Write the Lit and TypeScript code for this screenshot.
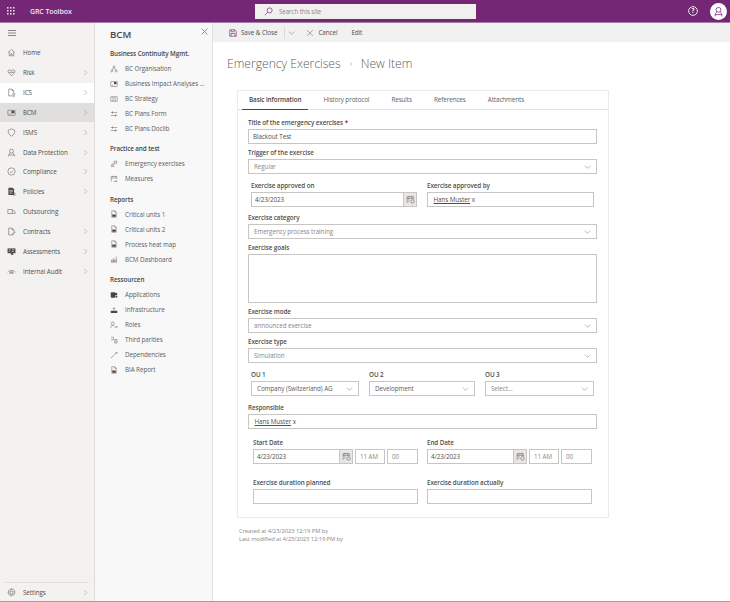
import { LitElement, html, css, svg } from "lit";
import { customElement } from "lit/decorators.js";

// icon bodies, all in a 16x16 box
const icons: Record<string, unknown> = {
  home: svg`<path d="M2 8l6-5.500L14 8M4 6.500V14h3v-4h2v4h3V6.500"/>`,
  risk: svg`<path d="M8 14L2.500 8C.5 5.500 3 2.500 5.500 3.500L8 5l2.500-1.500C13 2.500 15.500 5.500 13.500 8z"/><path d="M3 8h3l1-1.500L8.500 9l1-1.500H13"/>`,
  ics: svg`<path d="M10 14H3V2h6l3 3v3M9 2v3h3"/><circle cx="12" cy="11" r="2"/><path d="M10 14.500h4"/>`,
  bcm: svg`<rect x="1.500" y="4" width="13" height="9" rx="1"/><path class="solid" d="M8 5h5v5l-2-1.500-3 2z"/><path d="M3 10.500h3"/>`,
  isms: svg`<path d="M8 1.500L14 4c0 5-1.500 8.500-6 10.500C3.500 12.500 2 9 2 4z"/>`,
  person: svg`<circle cx="8" cy="5.500" r="3.500"/><path d="M3 15c0-4 1.500-6 3-6.500M13 15c0-4-1.500-6-3-6.500M3 12.500h10"/>`,
  check: svg`<circle cx="8" cy="8" r="6.500"/><path d="M5 8.500l2 2 4-4.500"/>`,
  policies: svg`<path class="solid" d="M2.500 1.500H10L12.500 4v10h-10z"/><path class="cut" d="M4.500 6h6M4.500 8.500h6M4.500 11h4"/><path d="M12 9l2.500 2v3.500H11"/>`,
  outsourcing: svg`<path d="M1.500 4.500h8v7h-8zM9.500 6.500h3l2 2.500v2.500h-5"/>`,
  contracts: svg`<path d="M11 14H3V2h6l3 3v3M9 2v3h3"/><path d="M9 13l4.500-5 1 1L10 14z"/>`,
  assess: svg`<rect class="solid" x="1" y="2.500" width="14" height="8.500"/><path class="cut" d="M3 5h4M9 5h4M3 8h2M8 8h4"/><path class="solid" d="M6 11h5v3H8z"/>`,
  audit: svg`<path d="M1 9.500C4 5 12 5 15 9.500"/><path d="M3.500 11.500C6 9.500 10 9.500 12.500 11.500"/><circle cx="8" cy="9.500" r="2"/>`,
  gear: svg`<circle cx="8" cy="8" r="2.500"/><path d="M6.800 1.500h2.400l.4 2 1.800-1 1.700 1.700-1 1.800 2 .4v2.400l-2 .4 1 1.800-1.700 1.700-1.800-1-.4 2H6.800l-.4-2-1.800 1-1.700-1.700 1-1.800-2-.4V6.800l2-.4-1-1.800 1.700-1.700 1.800 1z"/>`,
  org: svg`<circle cx="8" cy="4" r="2"/><circle cx="3.500" cy="12" r="2"/><circle cx="12.500" cy="12" r="2"/><path d="M7 6l-2.500 4M9 6l2.500 4"/>`,
  card: svg`<rect x="1.500" y="3" width="13" height="10" rx="1"/><path class="solid" d="M8 4h5v5l-2-1.500-3 2z"/><path d="M3.500 10.500h3"/>`,
  map: svg`<path d="M1.500 3.500h13v9h-13zM6 3.500v9M10 3.500v9"/>`,
  sliders: svg`<path d="M1.500 5h13M1.500 11h13"/><path d="M5 2.500v5M11 8.500v5"/>`,
  flag: svg`<circle cx="5" cy="10" r="2"/><path d="M2 14.500c0-1.500 1-2 3-2s3 .5 3 2M8 9V2.500l6 0-1.500 2 1.500 2H8"/>`,
  measure: svg`<path d="M2.500 13V3h11v5M2.500 6h11M5 1.500v3M11 1.500v3"/><path d="M7 12.500h7M12 10.500l2 2-2 2"/>`,
  report: svg`<path d="M12.500 14.500h-9v-13h6l3 3zM9.500 1.500v3h3"/><path class="solid" d="M4.500 9h7v4.500h-7z"/>`,
  dash: svg`<path d="M2 14.500h12M3.500 14V9M6.500 14V6M9.500 14V8M12.500 14V3"/><path d="M2 11.500h12"/>`,
  apps: svg`<rect class="solid" x="1.500" y="2.500" width="9" height="11" rx="2"/><circle class="solid" cx="12" cy="6" r="2.500"/><path class="solid" d="M11 9.500h3.500V13H11z"/>`,
  infra: svg`<path class="solid" d="M1.500 9.500h13v4.500h-13z"/><path d="M8 2.500v7M5.500 5h5"/>`,
  roles: svg`<circle cx="5.500" cy="5" r="3"/><path d="M1.500 14c0-3 1-5 4-5 1.500 0 2.500.5 3 1.500M9 12h5.500M12.500 10l2 2-2 2"/>`,
  third: svg`<path d="M2 2.500h5v5H2M9.500 7h4.500v7H9.500zM11 9.500h1.500M11 12h1.500"/>`,
  dep: svg`<path d="M3 13.500L13 3M2 12l2 2M11 3h3v3"/>`,
};

const navItems = [
  { label: "Home", icon: "home" },
  { label: "Risk", icon: "risk", more: true },
  { label: "ICS", icon: "ics", more: true, state: "open" },
  { label: "BCM", icon: "bcm", more: true, state: "current" },
  { label: "ISMS", icon: "isms", more: true },
  { label: "Data Protection", icon: "person", more: true },
  { label: "Compliance", icon: "check", more: true },
  { label: "Policies", icon: "policies", more: true },
  { label: "Outsourcing", icon: "outsourcing" },
  { label: "Contracts", icon: "contracts", more: true },
  { label: "Assessments", icon: "assess", more: true },
  { label: "Internal Audit", icon: "audit", more: true },
];

const subGroups = [
  {
    title: "Business Continuity Mgmt.",
    items: [
      ["BC Organisation", "org"],
      ["Business Impact Analyses ...", "card"],
      ["BC Strategy", "map"],
      ["BC Plans Form", "sliders"],
      ["BC Plans Doclib", "sliders"],
    ],
  },
  {
    title: "Practice and test",
    items: [
      ["Emergency exercises", "flag"],
      ["Measures", "measure"],
    ],
  },
  {
    title: "Reports",
    items: [
      ["Critical units 1", "report"],
      ["Critical units 2", "report"],
      ["Process heat map", "report"],
      ["BCM Dashboard", "dash"],
    ],
  },
  {
    title: "Ressourcen",
    items: [
      ["Applications", "apps"],
      ["Infrastructure", "infra"],
      ["Roles", "roles"],
      ["Third parities", "third"],
      ["Dependencies", "dep"],
      ["BIA Report", "report"],
    ],
  },
];

const tabs = ["Basic information", "History protocol", "Results", "References", "Attachments"];

function icon(name: string) {
  return html`<svg class="ico" viewBox="0 0 16 16">${icons[name]}</svg>`;
}

const chevronRight = html`<svg class="chev-r" viewBox="0 0 8 10"><path d="M2 1l4 4-4 4" /></svg>`;
const chevronDown = html`<svg class="chev-d" viewBox="0 0 10 6"><path d="M1 1l4 4 4-4" /></svg>`;

@customElement("app-root")
export class AppRoot extends LitElement {
  static styles = css`
    :host {
      display: flex;
      flex-direction: column;
      height: 602px;
      width: 730px;
      overflow: hidden;
      font-family: "Open Sans", "Liberation Sans", sans-serif;
      font-size: 6.3px;
      letter-spacing: -0.08px;
      color: #504e4c;
      background: #fff;
    }
    svg {
      display: block;
      flex: none;
    }
    .ico {
      width: 9px;
      height: 9px;
      fill: none;
      stroke: #6f6d6b;
      stroke-width: 1.1;
    }
    .ico .solid {
      fill: #484644;
      stroke: none;
    }
    .ico .cut {
      stroke: #f3f2f1;
    }

    .topbar {
      height: 22px;
      flex: none;
      display: flex;
      align-items: center;
      background: #742774;
      border-bottom: 1px solid #a77ea7;
      color: #f0e6f0;
    }
    .waffle {
      width: 8px;
      height: 8px;
      margin-left: 7px;
      fill: #e6d5e6;
    }
    .brand {
      margin-left: 15px;
      font-size: 7px;
      font-weight: 600;
      letter-spacing: -0.1px;
      width: 225px;
    }
    .search {
      width: 221px;
      height: 15px;
      background: #f1f0ef;
      display: flex;
      align-items: center;
      color: #8a8886;
      font-size: 6.2px;
    }
    .search svg {
      width: 9px;
      height: 9px;
      margin: 0 6px 0 9px;
      fill: none;
      stroke: #742774;
      stroke-width: 1.2;
    }
    .top-right {
      margin-left: auto;
      display: flex;
      align-items: center;
      gap: 12px;
      margin-right: 3px;
    }
    .help {
      width: 10px;
      height: 10px;
      fill: none;
      stroke: #fff;
      stroke-width: 1.4;
    }
    .help text {
      fill: #fff;
      stroke: none;
      font-size: 10px;
      font-weight: 700;
      text-anchor: middle;
    }
    .avatar {
      width: 17px;
      height: 17px;
      border-radius: 50%;
      background: #fff;
      display: flex;
      align-items: center;
      justify-content: center;
    }
    .avatar svg {
      width: 11px;
      height: 11px;
      fill: none;
      stroke: #742774;
      stroke-width: 1.1;
    }

    .body {
      flex: 1;
      min-height: 0;
      display: flex;
      border-bottom: 1px solid #a19f9d;
    }

    .nav {
      width: 94px;
      flex: none;
      background: #f3f2f1;
      border-right: 1px solid #dddcda;
      display: flex;
      flex-direction: column;
    }
    .burger {
      height: 20px;
      display: flex;
      align-items: center;
      padding-left: 8px;
    }
    .burger svg {
      width: 8px;
      height: 6px;
      stroke: #8a8886;
      stroke-width: 1;
    }
    .nav-item {
      height: 19.85px;
      display: flex;
      align-items: center;
      padding-left: 7px;
      gap: 7px;
      flex: none;
      box-sizing: border-box;
    }
    .nav-item.open {
      background: #fff;
    }
    .nav-item.current {
      background: #e1dfdd;
    }
    .nav-item .chev-r {
      margin-left: auto;
      margin-right: 6px;
    }
    .nav-spacer {
      flex: 1;
    }
    .nav-foot {
      margin: 0 5px;
      border-top: 1px solid #e1dfdd;
    }
    .nav-item.settings {
      height: 18px;
    }
    .chev-r {
      width: 5px;
      height: 7px;
      fill: none;
      stroke: #a19f9d;
      stroke-width: 1;
    }
    .chev-d {
      width: 7px;
      height: 4px;
      fill: none;
      stroke: #8a8886;
      stroke-width: 0.9;
    }

    .subnav {
      width: 118px;
      flex: none;
      box-sizing: border-box;
      background: #f8f8f8;
      border-right: 1px solid #e1dfdd;
      padding-left: 15px;
      position: relative;
    }
    .subnav-title {
      font-size: 9.6px;
      font-weight: 600;
      letter-spacing: 0;
      color: #484644;
      height: 13px;
      line-height: 13px;
      margin-top: 5px;
      margin-bottom: 5px;
    }
    .close {
      position: absolute;
      right: 4px;
      top: 5px;
      width: 7px;
      height: 7px;
      stroke: #8a8886;
      stroke-width: 0.9;
    }
    .sub-group {
      margin-bottom: 5.200px;
    }
    .sub-head {
      height: 15px;
      line-height: 15px;
      font-weight: 600;
      color: #484644;
      white-space: nowrap;
    }
    .sub-item {
      height: 15.050px;
      display: flex;
      align-items: center;
      gap: 7px;
      white-space: nowrap;
      color: #605e5c;
    }
    .sub-item .ico {
      width: 8px;
      height: 8px;
    }

    .main {
      flex: 1;
      min-width: 0;
      display: flex;
      flex-direction: column;
    }
    .commands {
      height: 19px;
      flex: none;
      background: #f1f1f1;
      display: flex;
      align-items: center;
      padding-left: 16px;
      color: #504e4c;
    }
    .commands .cmd {
      display: flex;
      align-items: center;
      gap: 4px;
    }
    .cmd svg {
      width: 8px;
      height: 8px;
      fill: none;
      stroke: #742774;
      stroke-width: 1.2;
    }
    .cmd.cancel svg {
      stroke: #605e5c;
      stroke-width: 1;
    }
    .cmd-sep {
      width: 1px;
      height: 12px;
      background: #dcdbd9;
      margin: 0 3px 0 7px;
    }
    .commands .chev-d {
      margin-right: 11px;
    }
    .cmd.cancel {
      margin-right: 14px;
    }

    .heading {
      margin: 14px 0 0 14px;
      height: 16px;
      line-height: 16px;
      font-size: 12.100px;
      font-weight: 300;
      letter-spacing: 0;
      color: #605e5c;
      display: flex;
      align-items: center;
    }
    .heading .crumb {
      margin: 0 8px;
      width: 4px;
      height: 6px;
    }
    .card {
      margin: 18px 0 0 24px;
      width: 372px;
      height: 428px;
      box-sizing: border-box;
      border: 1px solid #edebe9;
      flex: none;
    }
    .tabs {
      height: 19px;
      box-sizing: border-box;
      border-bottom: 1px solid #e1dfdd;
      display: flex;
      padding-left: 4px;
    }
    .tab {
      height: 19px;
      box-sizing: border-box;
      padding: 0 7px;
      margin-right: 8px;
      line-height: 18px;
      white-space: nowrap;
      color: #605e5c;
    }
    .tab.active {
      font-weight: 600;
      color: #484644;
      border-bottom: 1px solid #742774;
    }
    .form {
      padding: 8.400px 11px 0 10px;
    }
    .field {
      margin-bottom: 4px;
    }
    .lbl {
      display: block;
      height: 10px;
      line-height: 10px;
      margin-bottom: 1px;
      font-weight: 600;
      white-space: nowrap;
      color: #504e4c;
    }
    .lbl b {
      color: #a4262c;
      font-weight: 600;
    }
    .ctl {
      height: 15px;
      box-sizing: border-box;
      border: 1px solid #c8c6c4;
      background: #fff;
      display: flex;
      align-items: center;
      padding: 0 4px;
      white-space: nowrap;
      color: #504e4c;
    }
    .ctl.sel {
      color: #8a8886;
      justify-content: space-between;
      padding: 0 5px;
    }
    .ctl.sel.dark {
      color: #605e5c;
    }
    .ctl.area {
      height: 49px;
    }
    .person u {
      color: #504e4c;
      margin: 0 1.500px 0 1.500px;
    }
    .row {
      display: grid;
      column-gap: 10px;
    }
    .row.two {
      grid-template-columns: 166px 167px;
      margin: 7px 0 6px 3px;
    }
    .row.three {
      grid-template-columns: 108px 106px 109px;
      margin: 7px 0 7px 3px;
    }
    .row .field {
      margin: 0;
    }
    .dt {
      display: flex;
    }
    .dt .ctl {
      flex: 1;
      min-width: 0;
      padding: 0 3px;
    }
    .cal {
      width: 13px;
      height: 15px;
      flex: none;
      background: #e8e7e6;
      display: flex;
      align-items: center;
      justify-content: center;
      border: solid #c8c6c4;
      border-width: 1px 1px 1px 0;
      box-sizing: border-box;
    }
    .cal svg {
      width: 9px;
      height: 9px;
      fill: none;
      stroke: #605e5c;
      stroke-width: 1;
    }
    .row.when {
      grid-template-columns: 165px 165px;
      column-gap: 9px;
      margin: 9px 0 0 5px;
    }
    .row.dur {
      grid-template-columns: 165px 165px;
      column-gap: 9px;
      margin: 14px 0 0 5px;
    }
    .dt-time {
      display: flex;
      gap: 2px;
    }
    .dt-time .dt {
      flex: 1;
      min-width: 0;
    }
    .dt-time .ctl.small {
      color: #8a8886;
      flex: none;
      padding: 0 4px;
    }
    .hour {
      width: 30px;
    }
    .minute {
      width: 31px;
    }
    .audit {
      margin: 10px 0 0 26px;
      font-size: 5.800px;
      line-height: 7.500px;
      color: #8a8886;
    }
  `;

  private calendar() {
    return html`<span class="cal"><svg viewBox="0 0 16 16"><path d="M2 14V3h11v5M2 6h11M5 1.500v3M10 1.500v3M4 8.500h2M4 11h2"/><circle cx="11.500" cy="11.500" r="3"/></svg></span>`;
  }

  private select(label: string, value: string, dark = false) {
    return html`<div class="field">
      <span class="lbl">${label}</span>
      <div class="ctl sel ${dark ? "dark" : ""}"><span>${value}</span>${chevronDown}</div>
    </div>`;
  }

  private dateTime(label: string) {
    return html`<div class="field">
      <span class="lbl">${label}</span>
      <div class="dt-time">
        <div class="dt"><div class="ctl">4/23/2023</div>${this.calendar()}</div>
        <div class="ctl small hour">11 AM</div>
        <div class="ctl small minute">00</div>
      </div>
    </div>`;
  }

  render() {
    return html`
      <header class="topbar">
        <svg class="waffle" viewBox="0 0 8 8">
          ${[0, 3, 6].flatMap((y) => [0, 3, 6].map((x) => svg`<rect x=${x} y=${y} width="1.600" height="1.600" />`))}
        </svg>
        <div class="brand">GRC Toolbox</div>
        <div class="search">
          <svg viewBox="0 0 16 16"><circle cx="10" cy="6" r="4.500" /><path d="M6.500 9.500L1.500 14.500" /></svg>
          Search this site
        </div>
        <div class="top-right">
          <svg class="help" viewBox="0 0 16 16"><circle cx="8" cy="8" r="7" /><text x="8" y="11.500">?</text></svg>
          <div class="avatar">
            <svg viewBox="0 0 16 16"><circle cx="8" cy="5.500" r="3.500" /><path d="M3 15c0-4 1.500-6 3-6.500M13 15c0-4-1.500-6-3-6.500M3 12.500h10" /></svg>
          </div>
        </div>
      </header>
      <div class="body">
        <nav class="nav">
          <div class="burger"><svg viewBox="0 0 8 6"><path d="M0 .5h8M0 3h8M0 5.500h8" /></svg></div>
          ${navItems.map(
            (n) => html`<div class="nav-item ${n.state ?? ""}">
              ${icon(n.icon)}<span>${n.label}</span>${n.more ? chevronRight : ""}
            </div>`
          )}
          <div class="nav-spacer"></div>
          <div class="nav-foot"></div>
          <div class="nav-item settings">${icon("gear")}<span>Settings</span>${chevronRight}</div>
        </nav>
        <aside class="subnav">
          <div class="subnav-title">BCM</div>
          <svg class="close" viewBox="0 0 7 7"><path d="M.5.5l6 6M6.500.5l-6 6" /></svg>
          ${subGroups.map(
            (g) => html`<div class="sub-group">
              <div class="sub-head">${g.title}</div>
              ${g.items.map((i) => html`<div class="sub-item">${icon(i[1])}<span>${i[0]}</span></div>`)}
            </div>`
          )}
        </aside>
        <main class="main">
          <div class="commands">
            <div class="cmd">
              <svg viewBox="0 0 16 16"><path d="M1.500 1.500H12L14.500 4v10.500h-13zM4.500 1.500v4h6v-4M4 14.500V9h8v5.500" /></svg>
              Save &amp; Close
            </div>
            <div class="cmd-sep"></div>
            ${chevronDown}
            <div class="cmd cancel">
              <svg viewBox="0 0 16 16"><path d="M2 2l12 12M14 2L2 14" /></svg>
              Cancel
            </div>
            <div class="cmd">Edit</div>
          </div>
          <div class="heading">
            Emergency Exercises
            <svg class="chev-r crumb" viewBox="0 0 8 10"><path d="M2 1l4 4-4 4" /></svg>
            New Item
          </div>
          <section class="card">
            <div class="tabs">
              ${tabs.map((t, i) => html`<div class="tab ${i === 0 ? "active" : ""}">${t}</div>`)}
            </div>
            <div class="form">
              <div class="field">
                <span class="lbl">Title of the emergency exercises <b>*</b></span>
                <div class="ctl">Blackout Test</div>
              </div>
              ${this.select("Trigger of the exercise", "Regular")}
              <div class="row two">
                <div class="field">
                  <span class="lbl">Exercise approved on</span>
                  <div class="dt"><div class="ctl">4/23/2023</div>${this.calendar()}</div>
                </div>
                <div class="field">
                  <span class="lbl">Exercise approved by</span>
                  <div class="ctl person"><u>Hans Muster</u> x</div>
                </div>
              </div>
              ${this.select("Exercise category", "Emergency process training")}
              <div class="field">
                <span class="lbl">Exercise goals</span>
                <div class="ctl area"></div>
              </div>
              ${this.select("Exercise mode", "announced exercise")}
              ${this.select("Exercise type", "Simulation")}
              <div class="row three">
                ${this.select("OU 1", "Company (Switzerland) AG", true)}
                ${this.select("OU 2", "Development", true)}
                ${this.select("OU 3", "Select...")}
              </div>
              <div class="field">
                <span class="lbl">Responsible</span>
                <div class="ctl person"><u>Hans Muster</u> x</div>
              </div>
              <div class="row when">
                ${this.dateTime("Start Date")}
                ${this.dateTime("End Date")}
              </div>
              <div class="row dur">
                <div class="field"><span class="lbl">Exercise duration planned</span><div class="ctl"></div></div>
                <div class="field"><span class="lbl">Exercise duration actually</span><div class="ctl"></div></div>
              </div>
            </div>
          </section>
          <div class="audit">
            Created at 4/23/2023 12:19 PM by<br />
            Last modified at 4/23/2023 12:19 PM by
          </div>
        </main>
      </div>
    `;
  }
}
